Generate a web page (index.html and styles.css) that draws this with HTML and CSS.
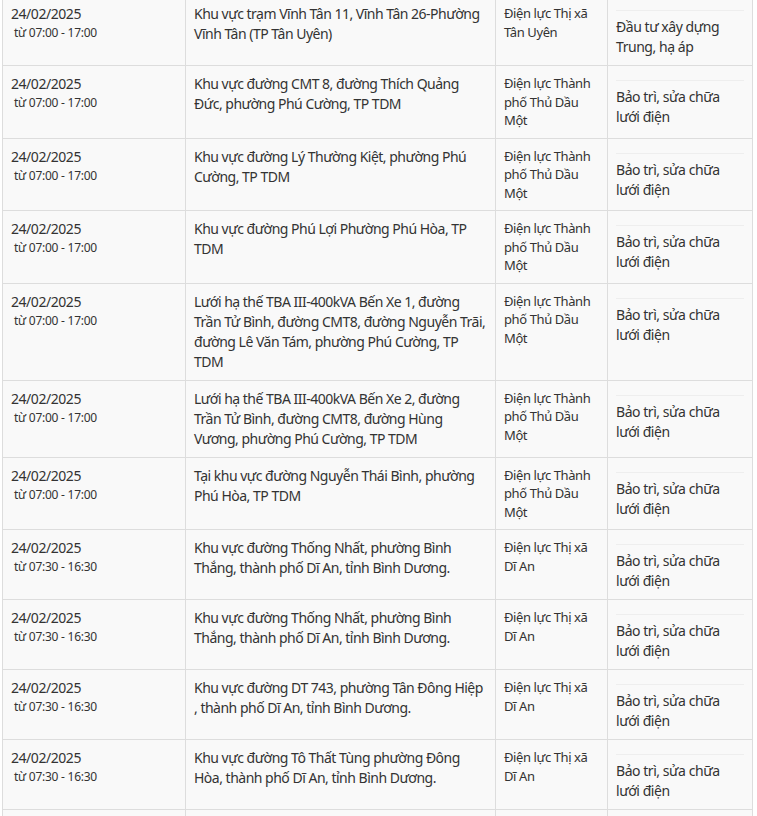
FILE: index.html
```html
<!DOCTYPE html>
<html lang="vi">
<head>
<meta charset="utf-8">
<title>Lịch cúp điện</title>
<link rel="stylesheet" href="styles.css">
</head>
<body>
<div class="wrap">
<table class="sched">
<colgroup><col class="c1"><col class="c2"><col class="c3"><col class="c4"></colgroup>
<tbody>
<tr>
<td class="when">24/02/2025<div class="time">từ 07:00 - 17:00</div></td>
<td class="area">Khu vực trạm Vĩnh Tân 11, Vĩnh Tân 26-Phường Vĩnh Tân (TP Tân Uyên)</td>
<td class="unit">Điện lực Thị xã Tân Uyên</td>
<td class="why"><div class="reason">Đầu tư xây dựng Trung, hạ áp</div></td>
</tr>
<tr>
<td class="when">24/02/2025<div class="time">từ 07:00 - 17:00</div></td>
<td class="area">Khu vực đường CMT 8, đường Thích Quảng Đức, phường Phú Cường, TP TDM</td>
<td class="unit">Điện lực Thành phố Thủ Dầu Một</td>
<td class="why"><div class="reason">Bảo trì, sửa chữa lưới điện</div></td>
</tr>
<tr>
<td class="when">24/02/2025<div class="time">từ 07:00 - 17:00</div></td>
<td class="area">Khu vực đường Lý Thường Kiệt, phường Phú Cường, TP TDM</td>
<td class="unit">Điện lực Thành phố Thủ Dầu Một</td>
<td class="why"><div class="reason">Bảo trì, sửa chữa lưới điện</div></td>
</tr>
<tr>
<td class="when">24/02/2025<div class="time">từ 07:00 - 17:00</div></td>
<td class="area">Khu vực đường Phú Lợi Phường Phú Hòa, TP TDM</td>
<td class="unit">Điện lực Thành phố Thủ Dầu Một</td>
<td class="why"><div class="reason">Bảo trì, sửa chữa lưới điện</div></td>
</tr>
<tr>
<td class="when">24/02/2025<div class="time">từ 07:00 - 17:00</div></td>
<td class="area">Lưới hạ thế TBA III-400kVA Bến Xe 1, đường Trần Tử Bình, đường CMT8, đường Nguyễn Trãi, đường Lê Văn Tám, phường Phú Cường, TP TDM</td>
<td class="unit">Điện lực Thành phố Thủ Dầu Một</td>
<td class="why"><div class="reason">Bảo trì, sửa chữa lưới điện</div></td>
</tr>
<tr>
<td class="when">24/02/2025<div class="time">từ 07:00 - 17:00</div></td>
<td class="area">Lưới hạ thế TBA III-400kVA Bến Xe 2, đường Trần Tử Bình, đường CMT8, đường Hùng Vương, phường Phú Cường, TP TDM</td>
<td class="unit">Điện lực Thành phố Thủ Dầu Một</td>
<td class="why"><div class="reason">Bảo trì, sửa chữa lưới điện</div></td>
</tr>
<tr>
<td class="when">24/02/2025<div class="time">từ 07:00 - 17:00</div></td>
<td class="area">Tại khu vực đường Nguyễn Thái Bình, phường Phú Hòa, TP TDM</td>
<td class="unit">Điện lực Thành phố Thủ Dầu Một</td>
<td class="why"><div class="reason">Bảo trì, sửa chữa lưới điện</div></td>
</tr>
<tr>
<td class="when">24/02/2025<div class="time">từ 07:30 - 16:30</div></td>
<td class="area">Khu vực đường Thống Nhất, phường Bình Thắng, thành phố Dĩ An, tỉnh Bình Dương.</td>
<td class="unit">Điện lực Thị xã Dĩ An</td>
<td class="why"><div class="reason">Bảo trì, sửa chữa lưới điện</div></td>
</tr>
<tr>
<td class="when">24/02/2025<div class="time">từ 07:30 - 16:30</div></td>
<td class="area">Khu vực đường Thống Nhất, phường Bình Thắng, thành phố Dĩ An, tỉnh Bình Dương.</td>
<td class="unit">Điện lực Thị xã Dĩ An</td>
<td class="why"><div class="reason">Bảo trì, sửa chữa lưới điện</div></td>
</tr>
<tr>
<td class="when">24/02/2025<div class="time">từ 07:30 - 16:30</div></td>
<td class="area">Khu vực đường DT 743, phường Tân Đông Hiệp ,&nbsp;thành phố Dĩ An, tỉnh Bình Dương.</td>
<td class="unit">Điện lực Thị xã Dĩ An</td>
<td class="why"><div class="reason">Bảo trì, sửa chữa lưới điện</div></td>
</tr>
<tr>
<td class="when">24/02/2025<div class="time">từ 07:30 - 16:30</div></td>
<td class="area">Khu vực đường Tô Thất Tùng phường Đông Hòa, thành phố Dĩ An, tỉnh Bình Dương.</td>
<td class="unit">Điện lực Thị xã Dĩ An</td>
<td class="why"><div class="reason">Bảo trì, sửa chữa lưới điện</div></td>
</tr>
<tr class="tail">
<td></td>
<td></td>
<td></td>
<td></td>
</tr>
</tbody>
</table>
</div>
</body>
</html>
```
FILE: styles.css
```css
html, body {
  margin: 0;
  padding: 0;
  background: #ffffff;
}
body {
  font-family: "Noto Sans", "Open Sans", sans-serif;
  font-size: 14px;
  line-height: 20px;
  letter-spacing: -0.45px;
  color: #333333;
  overflow: hidden;
}
.wrap {
  padding-left: 2px;
}
.sched {
  border-collapse: collapse;
  table-layout: fixed;
  width: 750px;
  margin-top: -5px;
  background: #f9f9f9;
}
.c1 { width: 183px; }
.c2 { width: 310px; }
.c3 { width: 112px; }
.c4 { width: 145px; }
.sched td {
  border: 1px solid #dddddd;
  padding: 8px;
  vertical-align: top;
}
.area {
  letter-spacing: -0.5px;
}
.time {
  font-size: 12px;
  line-height: 17px;
  letter-spacing: -0.25px;
  padding-left: 3px;
}
.unit {
  font-size: 13px;
  line-height: 18.5px;
  letter-spacing: -0.4px;
}
.reason {
  margin-top: 6px;
  border-top: 1px solid #eeeeee;
  padding-top: 6px;
}
.tail td {
  height: 60px;
}
```
